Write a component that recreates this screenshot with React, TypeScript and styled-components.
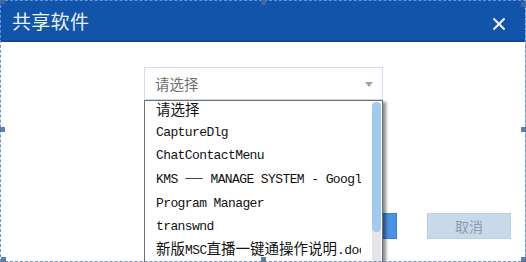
import { styled, createGlobalStyle } from "styled-components";

const GlobalStyle = createGlobalStyle`
  html, body {
    margin: 0;
    padding: 0;
  }

  body {
    width: 526px;
    height: 262px;
    overflow: hidden;
    background-color: #ffffff;
    font-family: "Noto Sans CJK SC", "Noto Sans", sans-serif;
  }
`;

const handles = [
  { x: 0, y: -1 },
  { x: 261, y: 0 },
  { x: 521, y: 2 },
  { x: 0, y: 127 },
  { x: 521, y: 127 },
  { x: 1, y: 257 },
  { x: 261, y: 257 },
  { x: 521, y: 257 },
];

const CloseIcon = () => (
  <svg width="12" height="12" viewBox="0 0 12 12">
    <path
      d="M1.2 1.2 L10.8 10.8 M10.8 1.2 L1.2 10.8"
      stroke="#e9eff9"
      strokeWidth="2.2"
      strokeLinecap="square"
    />
  </svg>
);

const App = () => {
  return (
    <Frame>
      <GlobalStyle />
      <Dialog>
        <Header>
          <Title>共享软件</Title>
          <CloseButton>
            <CloseIcon />
          </CloseButton>
        </Header>
        <Body>
          <SelectWrap>
            <SelectBox>
              <Placeholder>请选择</Placeholder>
              <Caret />
            </SelectBox>
            <Dropdown>
              <Options>
                <Option $cjk>请选择</Option>
                <Option>CaptureDlg</Option>
                <Option>ChatContactMenu</Option>
                <Option>
                  KMS <Dash>——</Dash> MANAGE SYSTEM - Google Chrome
                </Option>
                <Option>Program Manager</Option>
                <Option>transwnd</Option>
                <Option>
                  <Cjk>新版</Cjk>MSC<Cjk>直播一键通操作说明</Cjk>.docx
                </Option>
                <Option>Windows Explorer</Option>
              </Options>
              <ScrollTrack>
                <ScrollThumb />
              </ScrollTrack>
            </Dropdown>
          </SelectWrap>
          <Footer>
            <Button $primary>确定</Button>
            <Button>取消</Button>
          </Footer>
        </Body>
      </Dialog>
      <Selection>
        {handles.map((h, i) => (
          <Handle key={i} $x={h.x} $y={h.y} />
        ))}
      </Selection>
    </Frame>
  );
};

export default App;

const Frame = styled.div`
  width: 526px;
  height: 262px;

  position: relative;
  overflow: hidden;
`;

const Dialog = styled.div`
  width: 100%;
  height: 100%;

  display: flex;
  flex-direction: column;

  border-right: 1px solid #a9c7ea;
  box-sizing: border-box;
`;

const Header = styled.div`
  height: 42px;

  display: flex;
  align-items: center;
  justify-content: space-between;

  padding: 1px 20px 0 12px;
  box-sizing: border-box;

  background-color: #1254aa;
  border-bottom: 2px solid #0d4a99;
`;

const Title = styled.div`
  font-size: 19px;
  color: #eef3fb;
  letter-spacing: 0.3px;
`;

const CloseButton = styled.div`
  width: 12px;
  height: 12px;

  display: flex;
  margin-top: 6px;

  cursor: pointer;
`;

const Body = styled.div`
  flex: 1;

  display: flex;
  flex-direction: column;
`;

const SelectWrap = styled.div`
  width: 239px;
  height: 33px;

  position: relative;
  margin: 25px 0 0 144px;
`;

const SelectBox = styled.div`
  height: 33px;

  display: flex;
  align-items: center;
  justify-content: space-between;

  padding: 0 9px 0 10px;
  box-sizing: border-box;

  border: 1px solid #d2deec;
  background-color: #ffffff;
`;

const Placeholder = styled.div`
  font-size: 14.5px;
  color: #6f6f6f;
`;

const Caret = styled.div`
  width: 0;
  height: 0;

  margin-top: 2px;

  border-left: 4px solid transparent;
  border-right: 4px solid transparent;
  border-top: 5px solid #9aa4ae;
`;

const Dropdown = styled.div`
  width: 239px;
  height: 200px;

  position: absolute;
  top: 33px;
  left: 0;
  z-index: 2;

  display: flex;

  background-color: #ffffff;
  border: 1px solid #6e6e6e;
  box-sizing: border-box;
  box-shadow: 3px 2px 3px rgba(0, 0, 0, 0.45);
`;

const Options = styled.div`
  width: 216px;

  margin-top: -4px;
  overflow: hidden;
`;

const Option = styled.div<{ $cjk?: boolean }>`
  height: 23.7px;

  padding-left: 11px;
  white-space: nowrap;
  overflow: hidden;
  line-height: 23.7px;

  font-family: ${(p) =>
    p.$cjk
      ? `"Noto Sans CJK SC", sans-serif`
      : `"Liberation Mono", "Noto Sans CJK SC", monospace`};
  font-size: ${(p) => (p.$cjk ? "14.5px" : "13px")};
  letter-spacing: ${(p) => (p.$cjk ? "0" : "-0.6px")};
  color: #111111;
`;

const Cjk = styled.span`
  font-family: "Noto Sans CJK SC", sans-serif;
  font-size: 14.5px;
  line-height: 1;
  letter-spacing: 0;
`;

const Dash = styled.span`
  font-family: "Noto Sans CJK SC", sans-serif;
  font-size: 11px;
  line-height: 1;
  letter-spacing: 0;
  vertical-align: 1px;
`;

const ScrollTrack = styled.div`
  width: 9px;

  margin: 1px 1px 0 11px;

  background-color: #e5e5e9;
  border-radius: 4px 4px 0 0;
`;

const ScrollThumb = styled.div`
  height: 130px;

  background-color: #a0caf0;
  border-radius: 4.5px;
`;

const Footer = styled.div`
  display: flex;
  justify-content: flex-end;
  gap: 30px;

  margin-top: 113px;
  padding-right: 14px;
`;

const Button = styled.div<{ $primary?: boolean }>`
  width: 84px;
  height: 26px;

  display: flex;
  align-items: center;
  justify-content: center;

  box-sizing: border-box;
  border: 1px solid ${(p) => (p.$primary ? "#3a80d6" : "#bad0e6")};
  background-color: ${(p) => (p.$primary ? "#4a92e6" : "#c9d9ea")};

  font-size: 14px;
  color: ${(p) => (p.$primary ? "#ffffff" : "#8c9cb0")};

  cursor: pointer;
`;

const Selection = styled.div`
  position: absolute;
  inset: 0;
  z-index: 5;

  border: 1px dashed #5a97de;
  pointer-events: none;
`;

const Handle = styled.div<{ $x: number; $y: number }>`
  width: 5px;
  height: 5px;

  position: absolute;
  left: ${(p) => p.$x - 1}px;
  top: ${(p) => p.$y - 1}px;

  background-color: rgba(66, 104, 156, 0.85);
`;
